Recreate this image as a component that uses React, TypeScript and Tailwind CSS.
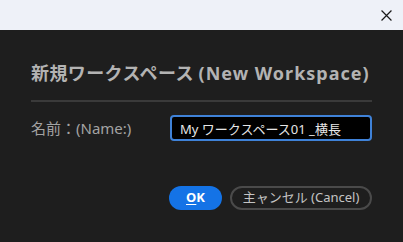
import React, { useState } from 'react';

const font = "font-['Noto_Sans','Noto_Sans_CJK_JP',sans-serif]";

export default function App() {
  const [name, setName] = useState('My ワークスペース01 _横長');

  return (
    <div className={`flex h-[242px] w-[403px] flex-col bg-[#1e1e1e] ${font}`}>
      {/* Title bar */}
      <div className="flex h-[30px] items-center justify-end bg-[#eef1f8] pr-[7px]">
        <button className="flex h-[20px] w-[20px] items-center justify-center text-[#1a1a1a]">
          <svg viewBox="0 0 10 10" width="11" height="11" stroke="currentColor" strokeWidth="1.1" fill="none">
            <path d="M0.5 0.5L9.5 9.5M9.5 0.5L0.5 9.5" />
          </svg>
        </button>
      </div>

      {/* Body */}
      <div className="flex flex-1 flex-col px-[31px] pt-[31px]">
        <h1 className="text-[18px] font-bold leading-[25px] text-[#b3b3b3] whitespace-nowrap">
          <span className="tracking-[0.4px]">新規ワークスペース</span>{' '}
          <span className="tracking-[1px]">(New Workspace)</span>
        </h1>
        <div className="mt-[14px] h-[2px] w-[341px] bg-[#3a3a3a]" />

        <div className="mt-[13px] flex items-center">
          <label className="w-[140px] text-[15px] text-[#a3a3a3]">名前：(Name:)</label>
          <input
            value={name}
            onChange={(e) => setName(e.target.value)}
            className="h-[26px] w-[202px] rounded-[4px] border-2 border-[#3f82d8] bg-black px-[8px] text-[13px] text-[#e6e6e6] outline-none"
          />
        </div>

        <div className="mt-[45px] flex justify-end gap-[8px]">
          <button className="h-[24px] w-[53px] rounded-full bg-[#1473e6] text-[13px] font-bold text-white">
            <span className="underline underline-offset-2">O</span>K
          </button>
          <button className="h-[24px] w-[142px] rounded-full border-2 border-[#4a4a4a] text-[13px] text-[#c4c4c4]">
            主ャンセル (Cancel)
          </button>
        </div>
      </div>
    </div>
  );
}
